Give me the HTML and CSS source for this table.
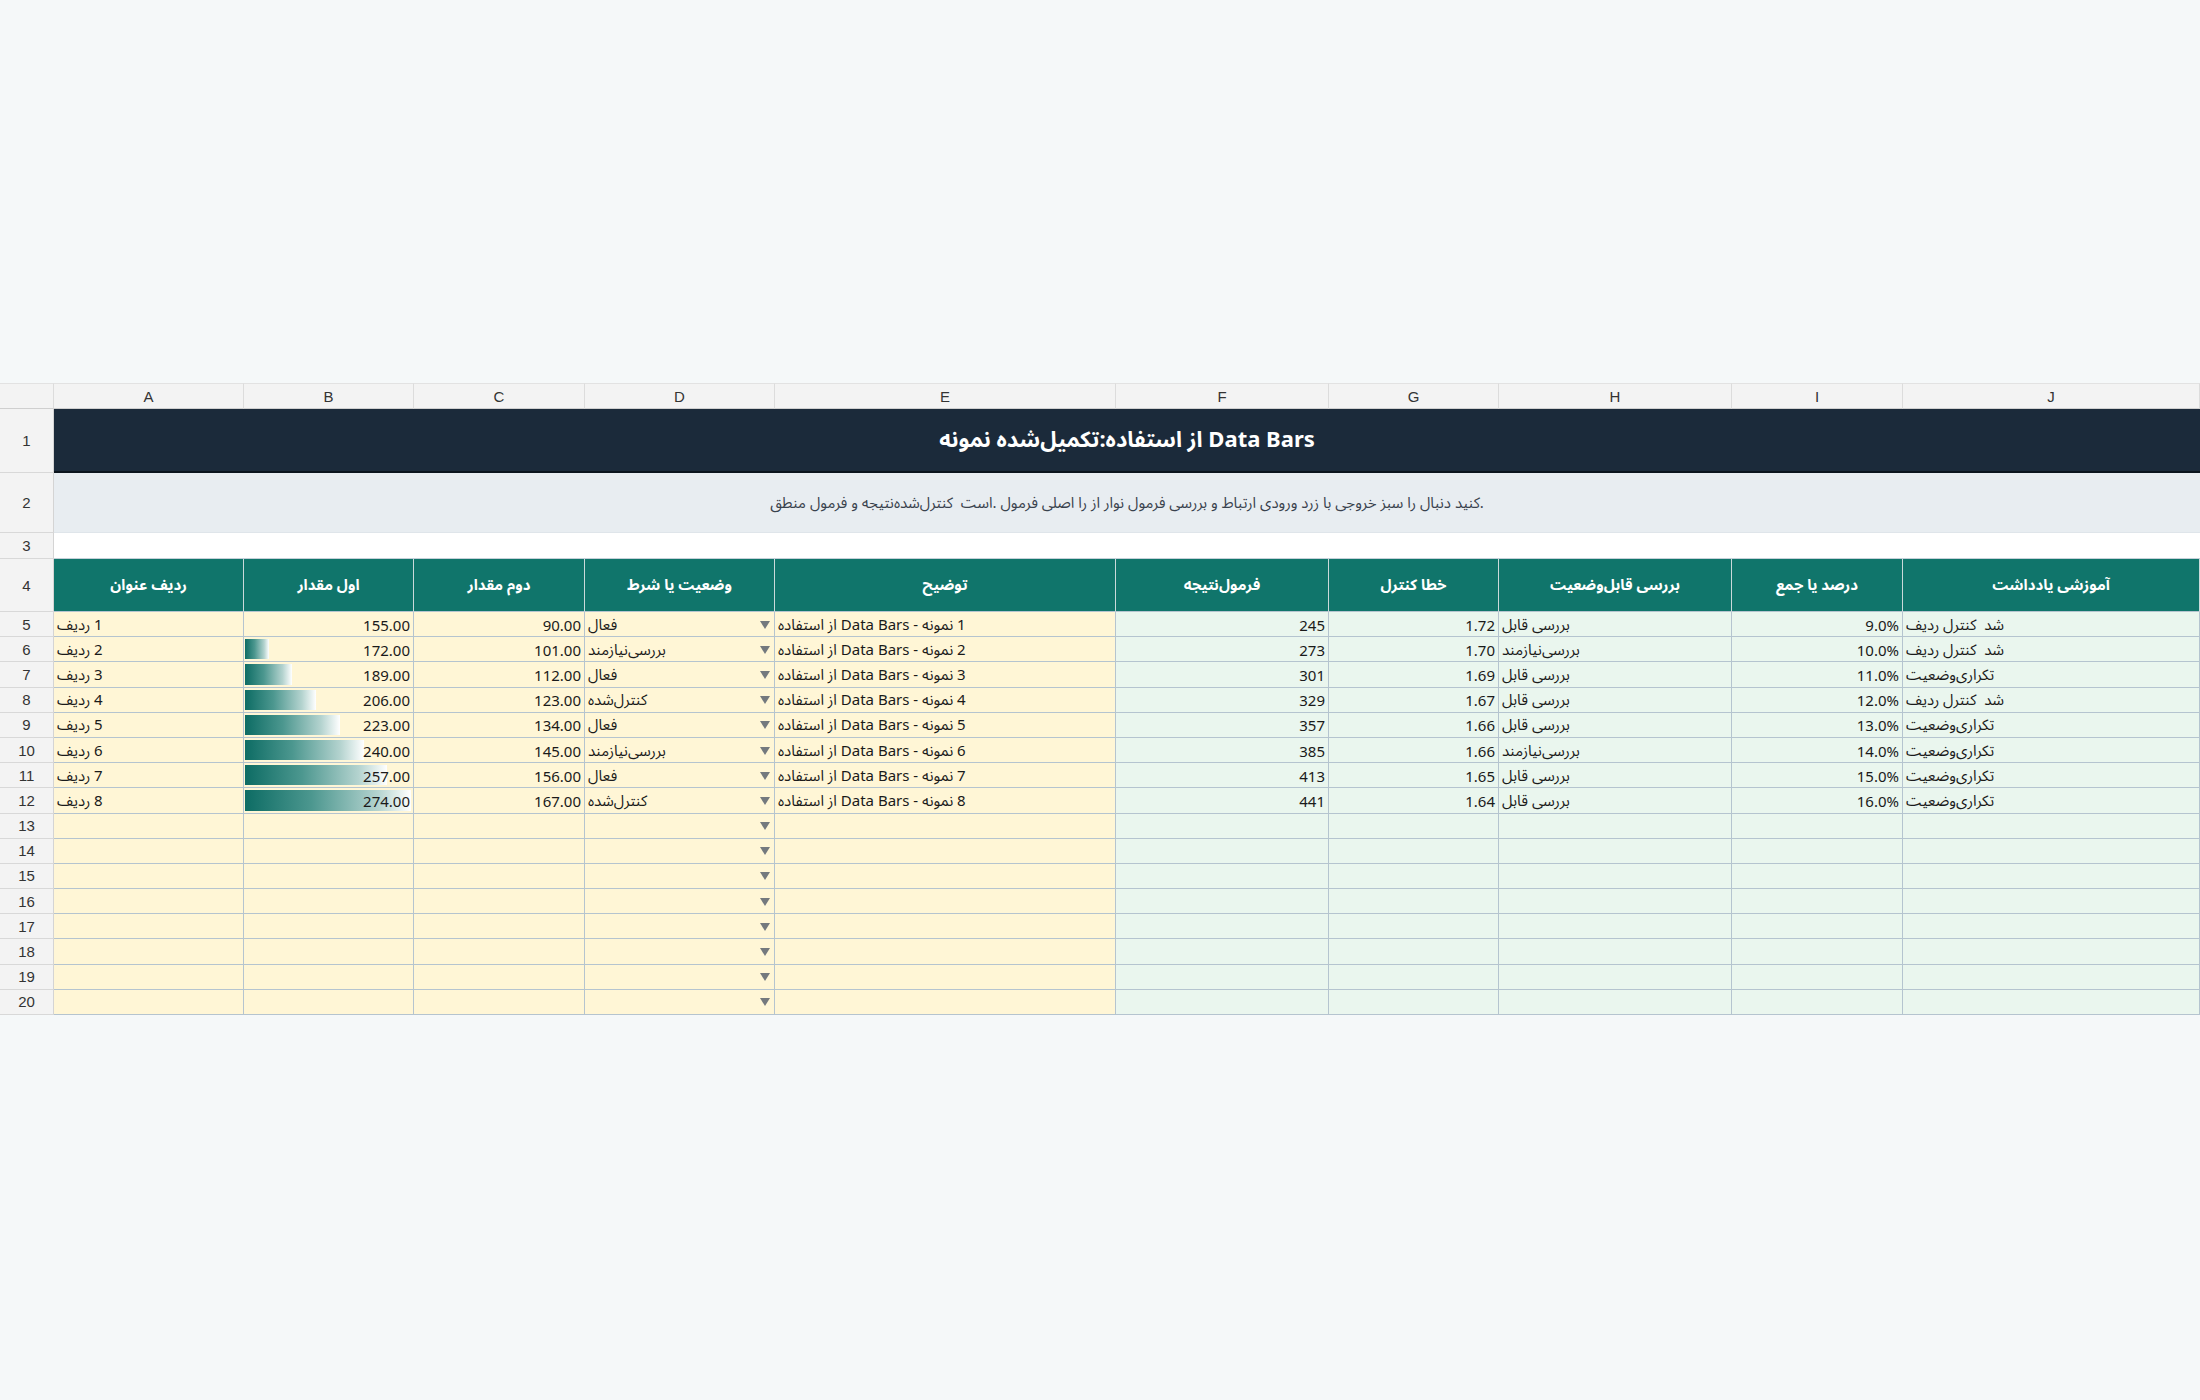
FILE: index.html
```html
<!DOCTYPE html>
<html lang="fa">
<head>
<meta charset="utf-8">
<title>نمونه تکمیل‌شده</title>
<link rel="stylesheet" href="styles.css">
</head>
<body>
<div class="sheet">
  <div class="corner"></div>
  <div class="ch">A</div><div class="ch">B</div><div class="ch">C</div><div class="ch">D</div><div class="ch">E</div>
  <div class="ch">F</div><div class="ch">G</div><div class="ch">H</div><div class="ch">I</div><div class="ch">J</div>

  <div class="rh">1</div>
  <div class="title"><span>Data Bars از استفاده:تکمیل‌شده نمونه</span></div>

  <div class="rh">2</div>
  <div class="note"><span>.کنید دنبال را سبز خروجی با زرد ورودی ارتباط و بررسی فرمول نوار از را اصلی فرمول .است  کنترل‌شده‌نتیجه و فرمول منطق</span></div>

  <div class="rh">3</div>
  <div class="gap"></div>

  <div class="rh">4</div>
  <div class="th">ردیف عنوان</div>
  <div class="th">اول مقدار</div>
  <div class="th">دوم مقدار</div>
  <div class="th">وضعیت یا شرط</div>
  <div class="th">توضیح</div>
  <div class="th">فرمول‌نتیجه</div>
  <div class="th">خطا کنترل</div>
  <div class="th">بررسی قابل‌وضعیت</div>
  <div class="th">درصد یا جمع</div>
  <div class="th">آموزشی یادداشت</div>

  <!-- row 5 -->
  <div class="rh">5</div>
  <div class="c in txt"><span>1 ردیف</span></div>
  <div class="c in num">155.00</div>
  <div class="c in num">90.00</div>
  <div class="c in dd"><span>فعال</span><i class="arrow"></i></div>
  <div class="c in txt"><span>1 نمونه - Data Bars از استفاده</span></div>
  <div class="c out num">245</div>
  <div class="c out num">1.72</div>
  <div class="c out txt"><span>بررسی قابل</span></div>
  <div class="c out num">9.0%</div>
  <div class="c out txt"><span>شد  کنترل ردیف</span></div>

  <!-- row 6 -->
  <div class="rh">6</div>
  <div class="c in txt"><span>2 ردیف</span></div>
  <div class="c in num"><b class="bar" style="width:24px"></b><span>172.00</span></div>
  <div class="c in num">101.00</div>
  <div class="c in dd"><span>بررسی‌نیازمند</span><i class="arrow"></i></div>
  <div class="c in txt"><span>2 نمونه - Data Bars از استفاده</span></div>
  <div class="c out num">273</div>
  <div class="c out num">1.70</div>
  <div class="c out txt"><span>بررسی‌نیازمند</span></div>
  <div class="c out num">10.0%</div>
  <div class="c out txt"><span>شد  کنترل ردیف</span></div>

  <!-- row 7 -->
  <div class="rh">7</div>
  <div class="c in txt"><span>3 ردیف</span></div>
  <div class="c in num"><b class="bar" style="width:47px"></b><span>189.00</span></div>
  <div class="c in num">112.00</div>
  <div class="c in dd"><span>فعال</span><i class="arrow"></i></div>
  <div class="c in txt"><span>3 نمونه - Data Bars از استفاده</span></div>
  <div class="c out num">301</div>
  <div class="c out num">1.69</div>
  <div class="c out txt"><span>بررسی قابل</span></div>
  <div class="c out num">11.0%</div>
  <div class="c out txt"><span>تکراری‌وضعیت</span></div>

  <!-- row 8 -->
  <div class="rh">8</div>
  <div class="c in txt"><span>4 ردیف</span></div>
  <div class="c in num"><b class="bar" style="width:71px"></b><span>206.00</span></div>
  <div class="c in num">123.00</div>
  <div class="c in dd"><span>کنترل‌شده</span><i class="arrow"></i></div>
  <div class="c in txt"><span>4 نمونه - Data Bars از استفاده</span></div>
  <div class="c out num">329</div>
  <div class="c out num">1.67</div>
  <div class="c out txt"><span>بررسی قابل</span></div>
  <div class="c out num">12.0%</div>
  <div class="c out txt"><span>شد  کنترل ردیف</span></div>

  <!-- row 9 -->
  <div class="rh">9</div>
  <div class="c in txt"><span>5 ردیف</span></div>
  <div class="c in num"><b class="bar" style="width:95px"></b><span>223.00</span></div>
  <div class="c in num">134.00</div>
  <div class="c in dd"><span>فعال</span><i class="arrow"></i></div>
  <div class="c in txt"><span>5 نمونه - Data Bars از استفاده</span></div>
  <div class="c out num">357</div>
  <div class="c out num">1.66</div>
  <div class="c out txt"><span>بررسی قابل</span></div>
  <div class="c out num">13.0%</div>
  <div class="c out txt"><span>تکراری‌وضعیت</span></div>

  <!-- row 10 -->
  <div class="rh">10</div>
  <div class="c in txt"><span>6 ردیف</span></div>
  <div class="c in num"><b class="bar" style="width:119px"></b><span>240.00</span></div>
  <div class="c in num">145.00</div>
  <div class="c in dd"><span>بررسی‌نیازمند</span><i class="arrow"></i></div>
  <div class="c in txt"><span>6 نمونه - Data Bars از استفاده</span></div>
  <div class="c out num">385</div>
  <div class="c out num">1.66</div>
  <div class="c out txt"><span>بررسی‌نیازمند</span></div>
  <div class="c out num">14.0%</div>
  <div class="c out txt"><span>تکراری‌وضعیت</span></div>

  <!-- row 11 -->
  <div class="rh">11</div>
  <div class="c in txt"><span>7 ردیف</span></div>
  <div class="c in num"><b class="bar" style="width:142px"></b><span>257.00</span></div>
  <div class="c in num">156.00</div>
  <div class="c in dd"><span>فعال</span><i class="arrow"></i></div>
  <div class="c in txt"><span>7 نمونه - Data Bars از استفاده</span></div>
  <div class="c out num">413</div>
  <div class="c out num">1.65</div>
  <div class="c out txt"><span>بررسی قابل</span></div>
  <div class="c out num">15.0%</div>
  <div class="c out txt"><span>تکراری‌وضعیت</span></div>

  <!-- row 12 -->
  <div class="rh">12</div>
  <div class="c in txt"><span>8 ردیف</span></div>
  <div class="c in num"><b class="bar" style="width:166px"></b><span>274.00</span></div>
  <div class="c in num">167.00</div>
  <div class="c in dd"><span>کنترل‌شده</span><i class="arrow"></i></div>
  <div class="c in txt"><span>8 نمونه - Data Bars از استفاده</span></div>
  <div class="c out num">441</div>
  <div class="c out num">1.64</div>
  <div class="c out txt"><span>بررسی قابل</span></div>
  <div class="c out num">16.0%</div>
  <div class="c out txt"><span>تکراری‌وضعیت</span></div>

  <!-- rows 13-20 -->
  <div class="rh">13</div>
  <div class="c in"></div><div class="c in"></div><div class="c in"></div><div class="c in dd"><span></span><i class="arrow"></i></div><div class="c in"></div>
  <div class="c out"></div><div class="c out"></div><div class="c out"></div><div class="c out"></div><div class="c out"></div>

  <div class="rh">14</div>
  <div class="c in"></div><div class="c in"></div><div class="c in"></div><div class="c in dd"><span></span><i class="arrow"></i></div><div class="c in"></div>
  <div class="c out"></div><div class="c out"></div><div class="c out"></div><div class="c out"></div><div class="c out"></div>

  <div class="rh">15</div>
  <div class="c in"></div><div class="c in"></div><div class="c in"></div><div class="c in dd"><span></span><i class="arrow"></i></div><div class="c in"></div>
  <div class="c out"></div><div class="c out"></div><div class="c out"></div><div class="c out"></div><div class="c out"></div>

  <div class="rh">16</div>
  <div class="c in"></div><div class="c in"></div><div class="c in"></div><div class="c in dd"><span></span><i class="arrow"></i></div><div class="c in"></div>
  <div class="c out"></div><div class="c out"></div><div class="c out"></div><div class="c out"></div><div class="c out"></div>

  <div class="rh">17</div>
  <div class="c in"></div><div class="c in"></div><div class="c in"></div><div class="c in dd"><span></span><i class="arrow"></i></div><div class="c in"></div>
  <div class="c out"></div><div class="c out"></div><div class="c out"></div><div class="c out"></div><div class="c out"></div>

  <div class="rh">18</div>
  <div class="c in"></div><div class="c in"></div><div class="c in"></div><div class="c in dd"><span></span><i class="arrow"></i></div><div class="c in"></div>
  <div class="c out"></div><div class="c out"></div><div class="c out"></div><div class="c out"></div><div class="c out"></div>

  <div class="rh">19</div>
  <div class="c in"></div><div class="c in"></div><div class="c in"></div><div class="c in dd"><span></span><i class="arrow"></i></div><div class="c in"></div>
  <div class="c out"></div><div class="c out"></div><div class="c out"></div><div class="c out"></div><div class="c out"></div>

  <div class="rh">20</div>
  <div class="c in"></div><div class="c in"></div><div class="c in"></div><div class="c in dd"><span></span><i class="arrow"></i></div><div class="c in"></div>
  <div class="c out"></div><div class="c out"></div><div class="c out"></div><div class="c out"></div><div class="c out"></div>
</div>
</body>
</html>
```
FILE: styles.css
```css
html, body {
  margin: 0;
  padding: 0;
}

body {
  background: #f5f8f9;
  font-family: "Noto Sans", "Noto Sans Arabic", "DejaVu Sans", sans-serif;
  color: #1c1c1c;
  min-height: 1400px;
}

.sheet {
  margin-top: 383px;
  display: grid;
  grid-template-columns: 54px 190px 170px 171px 190px 341px 213px 170px 233px 171px 297px;
  grid-template-rows: 26px 64px 60px 26px 53px repeat(16, 25.2px);
  width: 2200px;
}

.corner,
.ch,
.rh {
  box-sizing: border-box;
  background: #f3f3f3;
  font-family: "Liberation Sans", Arial, sans-serif;
  font-size: 15px;
  color: #333;
  display: flex;
  align-items: center;
  justify-content: center;
}

.corner,
.ch {
  border-top: 1px solid #e2e2e2;
  border-right: 1px solid #dcdcdc;
  border-bottom: 1px solid #cfcfcf;
}

.rh {
  border-right: 1px solid #d4d4d4;
  border-bottom: 1px solid #d8d8d8;
}

.title {
  grid-column: 2 / -1;
  box-sizing: border-box;
  background: #1b2a3a;
  border-bottom: 2px solid #0b141d;
  color: #ffffff;
  font-size: 22px;
  font-weight: 700;
  direction: rtl;
  display: flex;
  align-items: center;
  justify-content: center;
}

.note {
  grid-column: 2 / -1;
  box-sizing: border-box;
  background: #e8edf1;
  border-bottom: 1px solid #dfe5ea;
  color: #39424d;
  font-size: 15px;
  direction: rtl;
  white-space: pre;
  display: flex;
  align-items: center;
  justify-content: center;
}

.gap {
  grid-column: 2 / -1;
  box-sizing: border-box;
  background: #ffffff;
  border-bottom: 1px solid #c4d0d8;
}

.th {
  box-sizing: border-box;
  background: #10756b;
  color: #ffffff;
  font-size: 15px;
  font-weight: 700;
  direction: rtl;
  border-right: 1px solid #cbd9da;
  border-bottom: 1px solid #b6c5cf;
  display: flex;
  align-items: center;
  justify-content: center;
}

.c {
  box-sizing: border-box;
  position: relative;
  border-right: 1px solid #b5c4cf;
  border-bottom: 1px solid #b5c4cf;
  padding: 1px 3px 0;
  font-size: 15px;
  color: #1a1a1a;
  display: flex;
  align-items: center;
  white-space: pre;
  overflow: hidden;
}

.in {
  background: #fff6d6;
}

.out {
  background: #eaf6ee;
}

.num {
  justify-content: flex-end;
}

.num span {
  position: relative;
}

.txt {
  justify-content: flex-start;
}

.txt span,
.dd span {
  direction: rtl;
  unicode-bidi: isolate;
}

.dd {
  justify-content: space-between;
}

.arrow {
  display: block;
  width: 0;
  height: 0;
  margin-right: 1px;
  border-left: 5px solid transparent;
  border-right: 5px solid transparent;
  border-top: 8px solid #74797e;
}

.bar {
  position: absolute;
  left: 1px;
  top: 2px;
  bottom: 2px;
  background: linear-gradient(to right, #0d6c64 0%, #4c978f 40%, #b4d3cf 80%, #ffffff 100%);
}
```
